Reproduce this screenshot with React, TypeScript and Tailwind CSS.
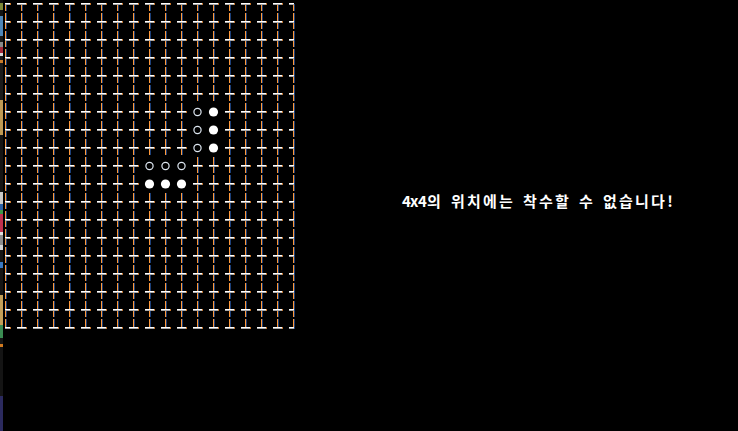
import React from 'react';

const SIZE = 19;

// 'o' = hollow stone, 'x' = filled stone
const stones: Record<string, 'o' | 'x'> = {
  '12,6': 'o', '12,7': 'o', '12,8': 'o',
  '13,6': 'x', '13,7': 'x', '13,8': 'x',
  '9,9': 'o', '10,9': 'o', '11,9': 'o',
  '9,10': 'x', '10,10': 'x', '11,10': 'x',
};

// bits of other windows peeking in at the left edge
const edge: [number, number, string][] = [
  [0, 3, '#111111'], [3, 10, '#7d8a3a'], [10, 16, '#141414'], [16, 36, '#4f86b8'],
  [36, 42, '#1a1a1a'], [42, 47, '#8a8a8a'], [47, 53, '#a3283a'], [53, 56, '#d8d8d8'],
  [56, 60, '#1a1a1a'], [60, 63, '#c77a2a'], [63, 100, '#1b1b1b'], [100, 135, '#bf9a55'],
  [135, 192, '#151515'], [192, 204, '#c8c8c8'], [204, 210, '#2c62a8'], [210, 214, '#3c9a4a'],
  [214, 232, '#c0304e'], [232, 235, '#e0e0e0'], [235, 245, '#8c8c8c'], [245, 250, '#d0d0d0'],
  [250, 262, '#161616'], [262, 268, '#3a78c0'], [268, 295, '#151515'], [295, 325, '#c3a05a'],
  [325, 338, '#3a8c52'], [338, 344, '#151515'], [344, 347, '#d07a20'], [347, 396, '#141414'],
  [396, 431, '#2b2a5e'],
];

const message = '4x4의 위치에는 착수할 수 없습니다!';

const Cell = ({ c, r }: { c: number; r: number }) => {
  const cx = 5 + 16 * c;
  const cy = 4 + 18 * r;
  const stone = stones[`${c},${r}`];

  if (stone === 'x') return <circle cx={cx + 0.5} cy={cy} r={4.6} fill="#ffffff" />;
  if (stone === 'o')
    return <circle cx={cx + 0.5} cy={cy} r={3.6} fill="none" stroke="#dde6f0" strokeWidth={1.2} />;

  const top = r === 0 ? cy : cy - 9;
  const bottom = r === SIZE - 1 ? cy + 1 : cy + 7;
  const left = c === 0 ? cx : cx - 4;
  const right = c === SIZE - 1 ? cx + 1 : cx + 5;

  return (
    <g>
      <rect x={cx} y={top} width={1} height={bottom - top} fill="#ff9a3c" />
      <rect x={cx + 1} y={top} width={1} height={bottom - top} fill="#1c3f78" />
      <rect x={left} y={cy - 1} width={right - left} height={1} fill="#ffffff" />
      <rect x={left} y={cy} width={right - left} height={1} fill="#a8a8a8" />
      {c !== SIZE - 1 && <rect x={right} y={cy - 1} width={1} height={2} fill="#c9772c" />}
    </g>
  );
};

const Board = () => {
  const cells = [];
  for (let r = 0; r < SIZE; r++) {
    for (let c = 0; c < SIZE; c++) {
      cells.push(<Cell key={`${c}-${r}`} c={c} r={r} />);
    }
  }
  return (
    <svg width={297} height={335} viewBox="3 0 297 335" className="block shrink-0">
      {cells}
    </svg>
  );
};

export default function App() {
  return (
    <div className="flex w-[738px] h-[431px] overflow-hidden bg-black">
      <div className="flex flex-col w-[3px] shrink-0">
        {edge.map(([a, b, color]) => (
          <div key={a} style={{ height: b - a, background: color }} />
        ))}
      </div>
      <Board />
      <div className="pl-[102px] pt-[192px]">
        <div className="flex text-white font-bold text-[15px] leading-[18px] font-['Noto_Sans_CJK_KR',sans-serif] whitespace-pre">
          {Array.from(message).map((ch, i) => (
            <span
              key={i}
              className={ch.charCodeAt(0) > 0x7f ? 'inline-block w-[16px] text-center' : 'inline-block w-[8px] text-center'}
            >
              {ch}
            </span>
          ))}
        </div>
      </div>
    </div>
  );
}
